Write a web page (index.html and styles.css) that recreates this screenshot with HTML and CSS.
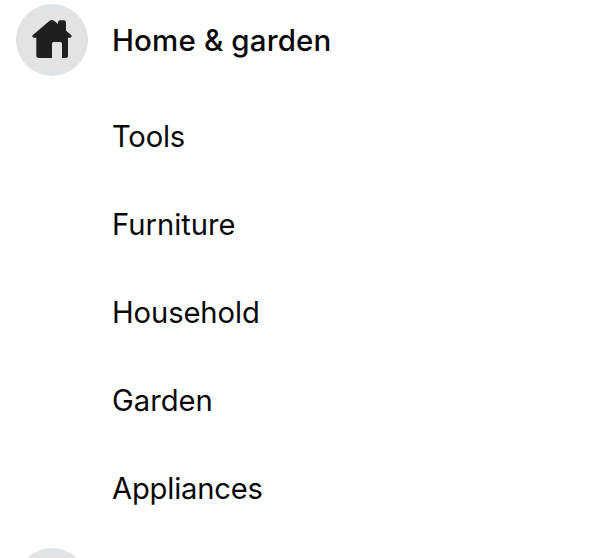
FILE: index.html
```html
<!DOCTYPE html>
<html lang="en">
<head>
<meta charset="utf-8">
<title>Categories</title>
<link rel="stylesheet" href="styles.css">
</head>
<body>
<nav class="categories">
  <section class="group">
    <div class="heading">
      <span class="badge">
        <svg class="icon" viewBox="0 0 40 40" aria-hidden="true">
          <path d="M17.3 .9Q19.8-1.1 22.3.9L26 4V2.5Q26 .3 28.2.3H31.8Q34 .3 34 2.5V10.7L39.1 15Q40.2 16 39.4 17Q38.9 17.7 37.8 17.7H36V35.5Q36 38 33.5 38H30V23.5Q30 22 28.5 22H21.5Q20 22 20 23.5V38H7Q4.3 38 4.3 35.3V17.7H2.2Q1.1 17.7.6 17Q-.2 16 .9 15Z"/>
        </svg>
      </span>
      <span class="title">Home &amp; garden</span>
    </div>
    <ul class="items">
      <li class="item tools">Tools</li>
      <li class="item furniture">Furniture</li>
      <li class="item household">Household</li>
      <li class="item garden">Garden</li>
      <li class="item appliances">Appliances</li>
    </ul>
  </section>
  <section class="group">
    <div class="heading"><span class="badge"></span></div>
  </section>
</nav>
</body>
</html>
```
FILE: styles.css
```css
body {
  margin: 0;
  background: #fff;
  color: #080809;
  font-family: Inter, "Liberation Sans", sans-serif;
  font-size: 29.2px;
  line-height: 40px;
}

.categories {
  height: 558px;
  overflow: hidden;
  padding: 4px 16px 0;
  box-sizing: border-box;
}

.heading {
  display: flex;
  align-items: center;
  gap: 24px;
}

.badge {
  display: flex;
  align-items: center;
  justify-content: center;
  flex: none;
  width: 72px;
  height: 72px;
  border-radius: 50%;
  background: #e0e4e7;
}

.icon {
  width: 40px;
  height: 40px;
  overflow: visible;
  fill: #1c2022;
}

.title {
  font-size: 29.5px;
  font-weight: 500;
  letter-spacing: 0.15px;
}

.items {
  list-style: none;
  margin: 0;
  padding: 17px 0 15px 96px;
}

.item {
  height: 88px;
  line-height: 88px;
}

.tools {
  letter-spacing: -0.2px;
}

.household {
  letter-spacing: -0.1px;
}

.appliances {
  letter-spacing: -0.2px;
}
```
